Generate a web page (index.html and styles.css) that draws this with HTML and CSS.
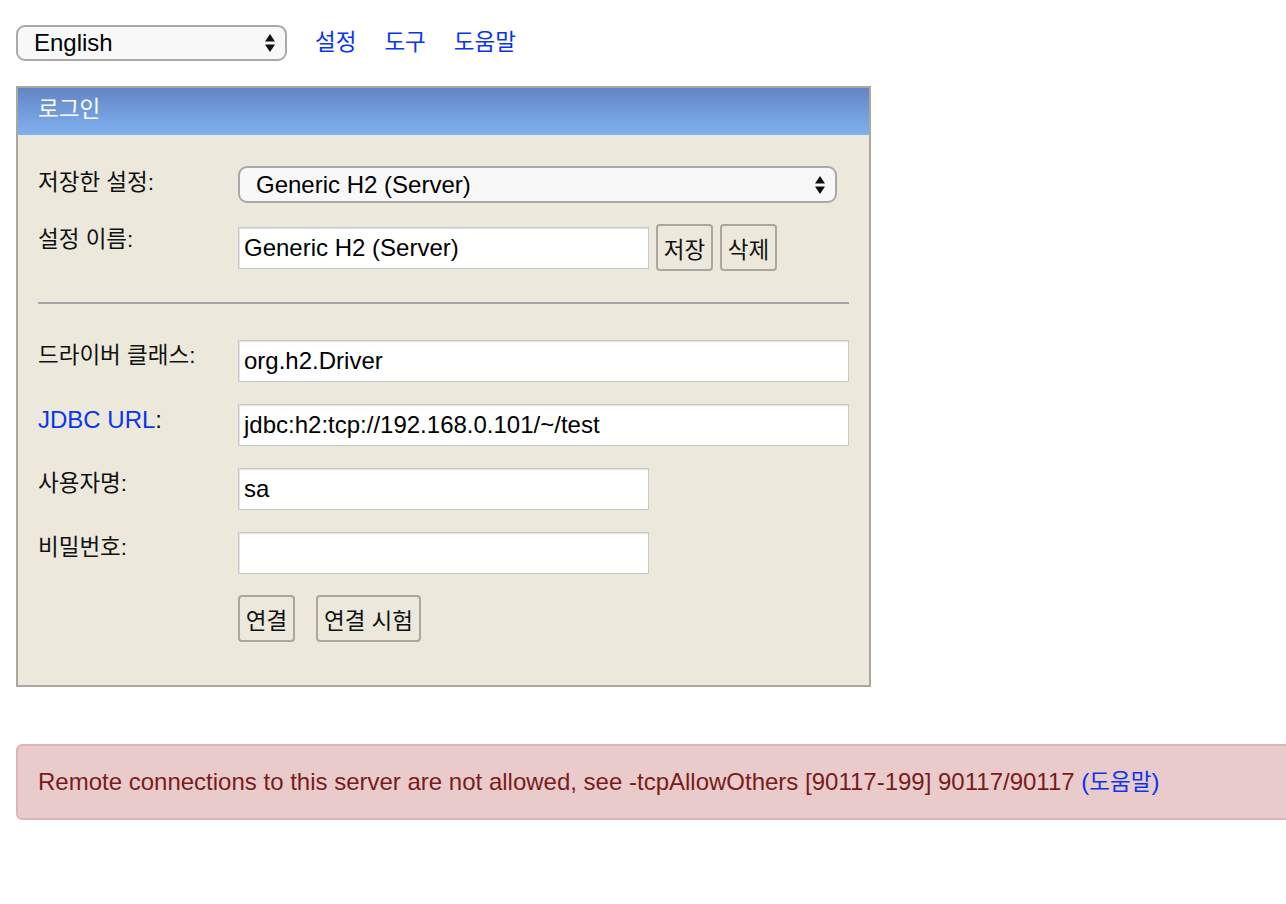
FILE: index.html
```html
<!DOCTYPE html>
<html lang="ko">
<head>
<meta charset="utf-8">
<title>H2 Console</title>
<link rel="stylesheet" href="styles.css">
</head>
<body>
<div class="topbar">
  <div class="sel sel-lang">
    <span class="sel-text">English</span>
    <svg class="sel-arrow" width="12" height="22" viewBox="0 0 12 22"><path d="M6 2 L11 9.5 H1 Z M1 12.5 H11 L6 20 Z" fill="#111"/></svg>
  </div>
  <a class="toplink ko" href="#">설정</a>
  <a class="toplink ko" href="#">도구</a>
  <a class="toplink ko" href="#">도움말</a>
</div>

<div class="panel">
  <div class="panel-head ko">로그인</div>
  <div class="panel-body">
    <div class="row row-select">
      <div class="label lbl-select ko">저장한 설정:</div>
      <div class="sel sel-setting">
        <span class="sel-text">Generic H2 (Server)</span>
        <svg class="sel-arrow" width="12" height="22" viewBox="0 0 12 22"><path d="M6 2 L11 9.5 H1 Z M1 12.5 H11 L6 20 Z" fill="#111"/></svg>
      </div>
    </div>
    <div class="row row-name">
      <div class="label ko">설정 이름:</div>
      <div class="field short name-field">Generic H2 (Server)</div>
      <button class="btn btn-first">저장</button>
      <button class="btn btn-next">삭제</button>
    </div>
    <div class="divider"></div>
    <div class="row row-input first-input">
      <div class="label ko">드라이버 클래스:</div>
      <div class="field long">org.h2.Driver</div>
    </div>
    <div class="row row-input">
      <div class="label"><a class="lbl-link" href="#">JDBC URL</a>:</div>
      <div class="field long">jdbc:h2:tcp://192.168.0.101/~/test</div>
    </div>
    <div class="row row-input">
      <div class="label ko">사용자명:</div>
      <div class="field short">sa</div>
    </div>
    <div class="row row-input">
      <div class="label ko">비밀번호:</div>
      <div class="field short"></div>
    </div>
    <div class="row row-actions">
      <div class="label"></div>
      <button class="btn">연결</button>
      <button class="btn btn-wide">연결 시험</button>
    </div>
  </div>
</div>

<div class="error">Remote connections to this server are not allowed, see -tcpAllowOthers [90117-199] 90117/90117 <a class="err-link" href="#">(<span class="ko">도움말</span>)</a></div>
</body>
</html>
```

FILE: styles.css
```css
html {
  overflow-x: hidden;
}
body {
  margin: 0;
  padding: 25px 16px 0 16px;
  background: #ffffff;
  font-family: "Liberation Sans", "Noto Sans CJK KR", sans-serif;
  font-size: 24px;
  color: #111111;
}
a {
  text-decoration: none;
}
.ko {
  font-size: 22.5px;
}
.topbar {
  display: flex;
  align-items: center;
  height: 36px;
}
.sel {
  position: relative;
  box-sizing: border-box;
  display: flex;
  align-items: center;
  background: #f8f8f8;
  border: 2px solid #a9a9a9;
  border-radius: 9px;
  color: #000;
  line-height: 28px;
}
.sel-lang {
  width: 271px;
  height: 36px;
  padding-left: 16px;
}
.sel-setting {
  width: 599px;
  height: 37px;
  padding-left: 16px;
}
.sel-arrow {
  position: absolute;
  right: 9px;
  top: 50%;
  margin-top: -11px;
}
.toplink {
  color: #0a34f0;
  margin-left: 28px;
  line-height: 28px;
}
.panel {
  width: 855px;
  box-sizing: border-box;
  margin-top: 25px;
  border: 2px solid #aaa89e;
  background: #ece8db;
}
.panel-head {
  height: 47px;
  box-sizing: border-box;
  padding-left: 20px;
  line-height: 44px;
  color: #ffffff;
  background: linear-gradient(to bottom, #6384c4, #80b2f0);
}
.panel-body {
  padding: 31px 20px 43px 20px;
}
.row {
  display: flex;
  align-items: flex-start;
}
.label {
  width: 200px;
  flex: none;
  line-height: 26px;
  height: 30px;
  padding-top: 3px;
  box-sizing: border-box;
}
.lbl-select {
  padding-top: 4px;
}
.lbl-link {
  color: #0a34f0;
}
.row-name {
  margin-top: 21px;
}
.field {
  box-sizing: border-box;
  height: 42px;
  background: #ffffff;
  border: 1px solid #c9c9c9;
  box-shadow: inset 1px 1px 0 #e2e2e2;
  padding-left: 5px;
  line-height: 40px;
  color: #000;
}
.short {
  width: 411px;
}
.long {
  width: 611px;
}
.name-field {
  margin-top: 3px;
}
.btn {
  box-sizing: border-box;
  height: 47px;
  background: #ece8db;
  border: 2px solid #aaa89e;
  border-radius: 4px;
  font-family: "Liberation Sans", "Noto Sans CJK KR", sans-serif;
  font-size: 22.5px;
  color: #111;
  padding: 0;
  width: 57px;
}
.btn-first {
  margin-left: 7px;
}
.btn-next {
  margin-left: 7px;
}
.btn-wide {
  width: 105px;
  margin-left: 21px;
}
.divider {
  margin-top: 31px;
  height: 0;
  border-top: 2px solid #a4a4a4;
}
.row-input {
  margin-top: 22px;
}
.first-input {
  margin-top: 36px;
}
.row-actions {
  margin-top: 21px;
}
.error {
  margin-top: 57px;
  margin-right: -40px;
  box-sizing: border-box;
  height: 76px;
  padding-left: 20px;
  line-height: 72px;
  background: #e9cbcb;
  border: 2px solid #ddb5b5;
  border-radius: 6px;
  color: #7a1b1b;
  white-space: nowrap;
}
.err-link {
  color: #0a34f0;
}
```
